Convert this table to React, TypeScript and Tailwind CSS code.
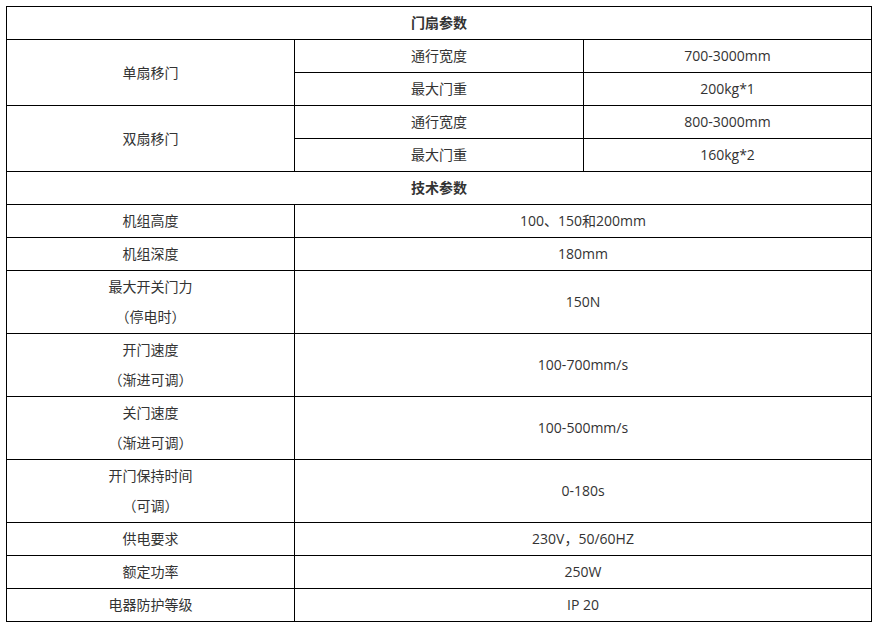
import React from 'react';

const font = { fontFamily: '"Open Sans", "Noto Sans CJK SC", sans-serif' };

const cell = 'border border-black text-center align-middle py-px leading-[30px] text-[14px] text-[#333]';

const techRows: { label: string[]; value: string }[] = [
  { label: ['机组高度'], value: '100、150和200mm' },
  { label: ['机组深度'], value: '180mm' },
  { label: ['最大开关门力', '（停电时）'], value: '150N' },
  { label: ['开门速度', '（渐进可调）'], value: '100-700mm/s' },
  { label: ['关门速度', '（渐进可调）'], value: '100-500mm/s' },
  { label: ['开门保持时间', '（可调）'], value: '0-180s' },
  { label: ['供电要求'], value: '230V，50/60HZ' },
  { label: ['额定功率'], value: '250W' },
  { label: ['电器防护等级'], value: 'IP 20' },
];

export default function App() {
  return (
    <div className="min-h-[629px] bg-white pt-[6px] pl-[6px]" style={font}>
      <table className="border-collapse w-[865px] table-fixed">
        <colgroup>
          <col className="w-[288px]" />
          <col className="w-[289px]" />
          <col className="w-[288px]" />
        </colgroup>
        <tbody>
          <tr>
            <td colSpan={3} className={cell + ' font-bold'}>门扇参数</td>
          </tr>
          <tr>
            <td rowSpan={2} className={cell}>单扇移门</td>
            <td className={cell}>通行宽度</td>
            <td className={cell}>700-3000mm</td>
          </tr>
          <tr>
            <td className={cell}>最大门重</td>
            <td className={cell}>200kg*1</td>
          </tr>
          <tr>
            <td rowSpan={2} className={cell}>双扇移门</td>
            <td className={cell}>通行宽度</td>
            <td className={cell}>800-3000mm</td>
          </tr>
          <tr>
            <td className={cell}>最大门重</td>
            <td className={cell}>160kg*2</td>
          </tr>
          <tr>
            <td colSpan={3} className={cell + ' font-bold'}>技术参数</td>
          </tr>
          {techRows.map((r) => (
            <tr key={r.label[0]}>
              <td className={cell}>
                {r.label.map((l) => (
                  <div key={l}>{l}</div>
                ))}
              </td>
              <td colSpan={2} className={cell}>{r.value}</td>
            </tr>
          ))}
        </tbody>
      </table>
    </div>
  );
}
